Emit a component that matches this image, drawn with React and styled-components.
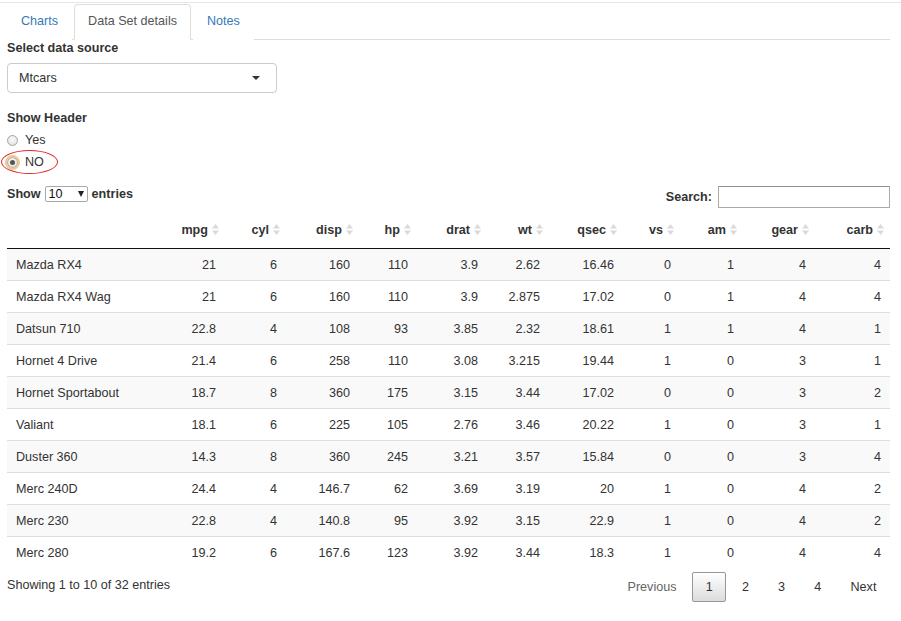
import React from "react";
import styled, { createGlobalStyle } from "styled-components";

const GlobalStyle = createGlobalStyle`
  body {
    margin: 0;
    background: #fff;
    font-family: "Liberation Sans", Arial, Helvetica, sans-serif;
    font-size: 12.6px;
    color: #333;
  }
`;

const TopRule = styled.div`
  height: 2px;
  border-bottom: 1px solid #e6e6e6;
  margin-bottom: 1px;
`;

const Page = styled.div`
  padding: 0 11px 0 7px;
`;

const TabBar = styled.ul`
  display: flex;
  list-style: none;
  margin: 0 0 1px;
  padding: 0;
  border-bottom: 1px solid #ddd;
`;

const Tab = styled.li`
  margin: 0 2px -1px 0;
  padding: 8px 13px 9px;
  line-height: 17px;
  border: 1px solid ${(p) => (p.$active ? "#ddd" : "transparent")};
  border-bottom-color: transparent;
  border-radius: 4px 4px 0 0;
  background: #fff;
  color: ${(p) => (p.$active ? "#555" : "#337ab7")};
  cursor: default;
`;

const Label = styled.div`
  font-weight: bold;
  line-height: 15px;
  margin-bottom: ${(p) => p.$gap || 7}px;
`;

const FormGroup = styled.div`
  margin-bottom: ${(p) => p.$mb ?? 18}px;
`;

const SelectBox = styled.div`
  width: 270px;
  height: 30px;
  box-sizing: border-box;
  border: 1px solid #ccc;
  border-radius: 4px;
  display: flex;
  align-items: center;
  justify-content: space-between;
  padding: 0 16px 0 11px;
`;

const Caret = styled.span`
  width: 0;
  height: 0;
  border-left: 4px solid transparent;
  border-right: 4px solid transparent;
  border-top: 4px solid #333;
`;

const RadioRow = styled.label`
  position: relative;
  display: flex;
  align-items: center;
  height: 18px;
  margin-bottom: 4px;
  line-height: 18px;
`;

const RadioDot = styled.span`
  width: 11px;
  height: 11px;
  box-sizing: border-box;
  border-radius: 50%;
  border: 1px solid #a6a6a6;
  background: radial-gradient(circle at 50% 40%, #fbfbfb, #dcdcdc);
  margin-right: 7px;
  display: flex;
  align-items: center;
  justify-content: center;
  outline: ${(p) => (p.$focus ? "2px solid #f2c78a" : "none")};
  outline-offset: 0px;

  &::after {
    content: "";
    display: ${(p) => (p.$checked ? "block" : "none")};
    width: 5px;
    height: 5px;
    border-radius: 50%;
    background: #555;
  }
`;

const Ellipse = styled.span`
  position: absolute;
  left: -6px;
  top: -3px;
  width: 55px;
  height: 22px;
  border: 1px solid #e3262c;
  border-radius: 50%;
  pointer-events: none;
`;

const Controls = styled.div`
  display: flex;
  justify-content: space-between;
  align-items: flex-start;
  margin-top: 15px;
  height: 22px;
`;

const LengthBox = styled.div`
  display: flex;
  align-items: center;
  line-height: 18px;
  font-weight: bold;
  margin-top: -1px;
`;

const SmallSelect = styled.span`
  display: inline-flex;
  align-items: center;
  justify-content: space-between;
  width: 43px;
  height: 16px;
  box-sizing: border-box;
  border: 1px solid #a9a9a9;
  border-radius: 2px;
  margin: 0 4px;
  padding: 0 3px 0 3px;
  font-weight: normal;
  font-size: 12.6px;
  color: #111;
`;

const SmallArrow = styled.span`
  width: 0;
  height: 0;
  border-left: 3.5px solid transparent;
  border-right: 3.5px solid transparent;
  border-top: 6px solid #222;
`;

const SearchBox = styled.label`
  display: flex;
  align-items: center;
  font-weight: bold;
`;

const SearchInput = styled.span`
  display: inline-block;
  width: 172px;
  height: 22px;
  box-sizing: border-box;
  margin-left: 6px;
  border: 1px solid #a9a9a9;
  border-top-color: #8f8f8f;
  background: #fff;
`;

const Table = styled.table`
  width: 883px;
  table-layout: fixed;
  border-collapse: separate;
  border-spacing: 0;
  margin-top: 4px;
`;

const Col = styled.col`
  width: ${(p) => p.$w}px;
`;

const Th = styled.th`
  padding: 9px 6px 9px 9px;
  line-height: 18px;
  font-weight: bold;
  text-align: right;
  border-bottom: 1px solid #111;
  white-space: nowrap;
`;

const SortIcon = styled.svg`
  width: 7px;
  height: 11px;
  margin-left: 4px;
  vertical-align: -1px;
`;

const Row = styled.tr`
  background: ${(p) => (p.$odd ? "#f9f9f9" : "#fff")};
`;

const Td = styled.td`
  padding: 8px 9px 6px;
  line-height: 17px;
  text-align: ${(p) => (p.$left ? "left" : "right")};
  border-top: ${(p) => (p.$first ? "none" : "1px solid #ddd")};
  white-space: nowrap;
  overflow: hidden;
`;

const Footer = styled.div`
  display: flex;
  justify-content: space-between;
  align-items: flex-start;
  margin-top: 4px;
`;

const Info = styled.div`
  padding-top: 5px;
  line-height: 17px;
`;

const Pager = styled.div`
  display: flex;
`;

const PageBtn = styled.span`
  margin-left: 2px;
  padding: 6px 12.6px 5px;
  line-height: 17px;
  border: 1px solid ${(p) => (p.$current ? "#979797" : "transparent")};
  border-radius: 2px;
  color: ${(p) => (p.$disabled ? "#666" : "#333")};
  background: ${(p) =>
    p.$current ? "linear-gradient(to bottom, #fff 0%, #dcdcdc 100%)" : "transparent"};
`;

const columns = [
  { key: "name", w: 153 },
  { key: "mpg", w: 65 },
  { key: "cyl", w: 61 },
  { key: "disp", w: 73 },
  { key: "hp", w: 58 },
  { key: "drat", w: 70 },
  { key: "wt", w: 62 },
  { key: "qsec", w: 74 },
  { key: "vs", w: 57 },
  { key: "am", w: 63 },
  { key: "gear", w: 72 },
  { key: "carb", w: 75 },
];

const rows = [
  ["Mazda RX4", "21", "6", "160", "110", "3.9", "2.62", "16.46", "0", "1", "4", "4"],
  ["Mazda RX4 Wag", "21", "6", "160", "110", "3.9", "2.875", "17.02", "0", "1", "4", "4"],
  ["Datsun 710", "22.8", "4", "108", "93", "3.85", "2.32", "18.61", "1", "1", "4", "1"],
  ["Hornet 4 Drive", "21.4", "6", "258", "110", "3.08", "3.215", "19.44", "1", "0", "3", "1"],
  ["Hornet Sportabout", "18.7", "8", "360", "175", "3.15", "3.44", "17.02", "0", "0", "3", "2"],
  ["Valiant", "18.1", "6", "225", "105", "2.76", "3.46", "20.22", "1", "0", "3", "1"],
  ["Duster 360", "14.3", "8", "360", "245", "3.21", "3.57", "15.84", "0", "0", "3", "4"],
  ["Merc 240D", "24.4", "4", "146.7", "62", "3.69", "3.19", "20", "1", "0", "4", "2"],
  ["Merc 230", "22.8", "4", "140.8", "95", "3.92", "3.15", "22.9", "1", "0", "4", "2"],
  ["Merc 280", "19.2", "6", "167.6", "123", "3.92", "3.44", "18.3", "1", "0", "4", "4"],
];

const Sort = () => (
  <SortIcon viewBox="0 0 7 11">
    <path d="M3.5 0 L7 4.5 L0 4.5 Z" fill="#dadada" />
    <path d="M3.5 11 L7 6.5 L0 6.5 Z" fill="#dadada" />
  </SortIcon>
);

const App = () => {
  return (
    <>
      <GlobalStyle />
      <TopRule />
      <Page>
        <TabBar>
          <Tab>Charts</Tab>
          <Tab $active>Data Set details</Tab>
          <Tab>Notes</Tab>
        </TabBar>

        <FormGroup>
          <Label>Select data source</Label>
          <SelectBox>
            <span>Mtcars</span>
            <Caret />
          </SelectBox>
        </FormGroup>

        <FormGroup $mb={0}>
          <Label $gap={5}>Show Header</Label>
          <RadioRow>
            <RadioDot />
            Yes
          </RadioRow>
          <RadioRow>
            <RadioDot $checked $focus />
            NO
            <Ellipse />
          </RadioRow>
        </FormGroup>

        <Controls>
          <LengthBox>
            Show
            <SmallSelect>
              10
              <SmallArrow />
            </SmallSelect>
            entries
          </LengthBox>
          <SearchBox>
            Search:
            <SearchInput />
          </SearchBox>
        </Controls>

        <Table>
          <colgroup>
            {columns.map((c) => (
              <Col key={c.key} $w={c.w} />
            ))}
          </colgroup>
          <thead>
            <tr>
              {columns.map((c) =>
                c.key === "name" ? (
                  <Th key={c.key} />
                ) : (
                  <Th key={c.key}>
                    {c.key}
                    <Sort />
                  </Th>
                )
              )}
            </tr>
          </thead>
          <tbody>
            {rows.map((r, i) => (
              <Row key={r[0]} $odd={i % 2 === 0}>
                {r.map((v, j) => (
                  <Td key={j} $left={j === 0} $first={i === 0}>
                    {v}
                  </Td>
                ))}
              </Row>
            ))}
          </tbody>
        </Table>

        <Footer>
          <Info>Showing 1 to 10 of 32 entries</Info>
          <Pager>
            <PageBtn $disabled>Previous</PageBtn>
            <PageBtn $current>1</PageBtn>
            <PageBtn>2</PageBtn>
            <PageBtn>3</PageBtn>
            <PageBtn>4</PageBtn>
            <PageBtn>Next</PageBtn>
          </Pager>
        </Footer>
      </Page>
    </>
  );
};

export default App;
